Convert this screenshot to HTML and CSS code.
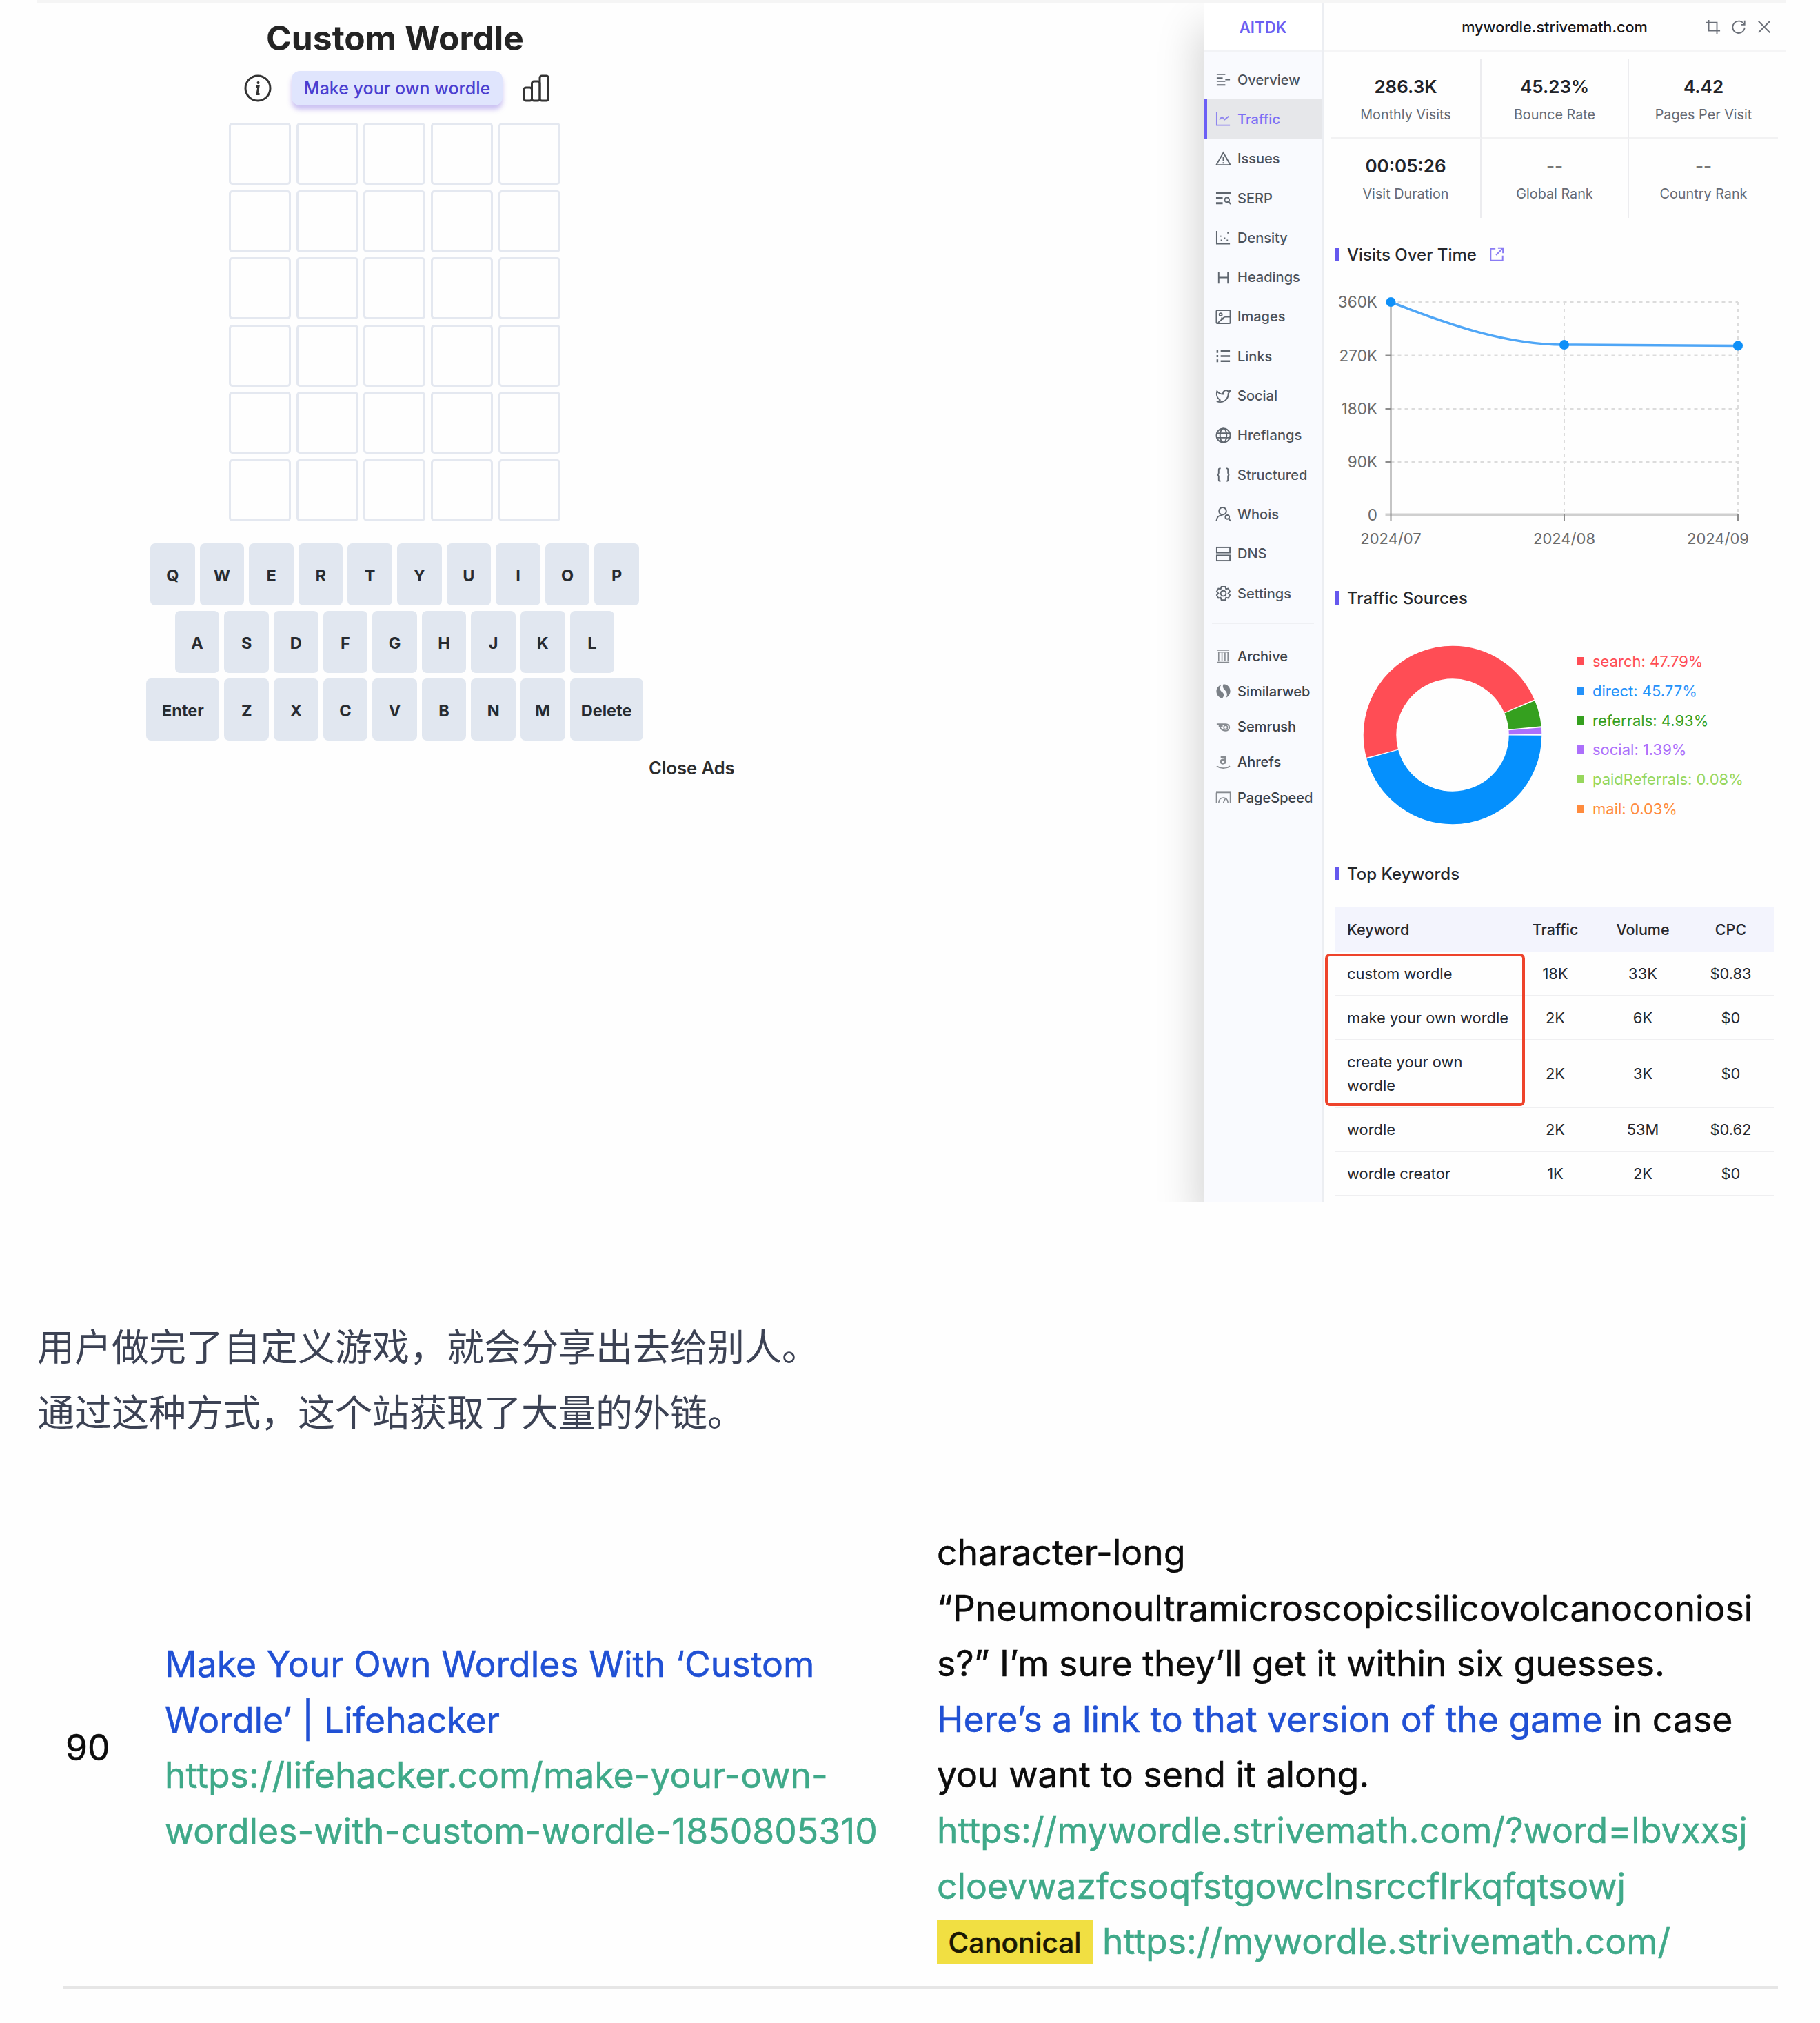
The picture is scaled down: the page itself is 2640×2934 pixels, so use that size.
FILE: index.html
```html
<!DOCTYPE html>
<html lang="zh-CN">
<head>
<meta charset="utf-8">
<title>Custom Wordle</title>
<link rel="stylesheet" href="styles.css">
</head>
<body>
<svg class="sprite" width="0" height="0" aria-hidden="true">
  <symbol id="i-overview" viewBox="0 0 24 24"><path d="M2 4h13M2 9.500h9M2 14.500h13M2 20h13M15 12h7"/></symbol>
  <symbol id="i-traffic" viewBox="0 0 24 24"><path d="M2 2v19.500h20M6 13l4-4 4 4 6-5"/></symbol>
  <symbol id="i-issues" viewBox="0 0 24 24"><path d="M12 2.500 1.500 21h21zM12 9v6M12 17v2"/></symbol>
  <symbol id="i-serp" viewBox="0 0 24 24"><path d="M1 4.500h22M1 11.500h10M1 19.500h10" stroke-width="3"/><circle cx="17.500" cy="14.500" r="3.500"/><path d="m20 17 3 4"/></symbol>
  <symbol id="i-density" viewBox="0 0 24 24"><path d="M2 2v19.500h20M8 9v2M14 12v2M9 15v2M19 4v2M18 15v2"/></symbol>
  <symbol id="i-headings" viewBox="0 0 24 24"><path d="M5 3v18M19 3v18M5 12h14"/></symbol>
  <symbol id="i-images" viewBox="0 0 24 24"><rect x="1.500" y="2" width="21" height="20" rx="1.500"/><circle cx="8" cy="8.500" r="2"/><path d="m4 21 10-9M9 13l3 3M14 12h8"/></symbol>
  <symbol id="i-links" viewBox="0 0 24 24"><path d="M8 4.500h14M8 12h14M8 19.500h14M3 3v4M3 10.500v3M3 17v4" stroke-width="2.600"/></symbol>
  <symbol id="i-social" viewBox="0 0 24 24"><path d="M22.500 3.500l-3 4.500c.5 9-8 15.500-17.500 12 2.500 0 4-.8 5-2C2.500 15 1 9.500 2.500 4.500 5 7.500 8 9 11.500 9 11 4 16 1.500 19 4.500z"/></symbol>
  <symbol id="i-globe" viewBox="0 0 24 24"><circle cx="12" cy="12" r="10.500"/><ellipse cx="12" cy="12" rx="5" ry="10.500"/><path d="M2 8.500h20M2 15.500h20"/></symbol>
  <symbol id="i-braces" viewBox="0 0 24 24"><path d="M8 2.500H6.500Q5 2.500 5 4.500v5Q5 11.500 3 12q2 .5 2 2.500v5q0 2 1.500 2H8M16 2.500h1.500q1.500 0 1.500 2v5q0 2 2 2.500-2 .5-2 2.500v5q0 2-1.500 2H16"/></symbol>
  <symbol id="i-whois" viewBox="0 0 24 24"><circle cx="11" cy="7.500" r="5.500"/><path d="M1.500 22c.5-5 4-8.500 9-8.500"/><circle cx="18" cy="16.500" r="3"/><path d="m20 19 3 3.500"/></symbol>
  <symbol id="i-dns" viewBox="0 0 24 24"><rect x="2" y="2" width="20" height="8"/><rect x="2" y="14" width="20" height="8"/></symbol>
  <symbol id="i-settings" viewBox="0 0 24 24"><path d="M9 2h6l1 3.500 3.500-.8 2.500 4.600L19.500 12l2.500 2.700-2.500 4.600-3.500-.8L15 22H9l-1-3.500-3.500.8L2 14.700 4.500 12 2 9.300l2.500-4.600 3.500.8z"/><circle cx="12" cy="12" r="4"/></symbol>
  <symbol id="i-archive" viewBox="0 0 24 24"><path d="M3 3h18M4 6h16M5 6v14M10 7v12M14.500 7v12M19 6v14M3 21.500h18"/></symbol>
  <symbol id="i-similarweb" viewBox="0 0 24 24"><g fill="currentColor" stroke="none"><path d="M9 2C6 3 2 6 1.500 11 1 17 5 22 10.500 22.500 14 19 13 15 10 13 6 10 6 6 9 2z"/><path d="M12 1.500C18 1 22.500 6 22.500 12c0 4-2.500 8-6 9.500 2-4 1-8-2-11-3-2.500-4-6-2.500-9z"/></g></symbol>
  <symbol id="i-semrush" viewBox="0 0 24 24"><path d="M2 7.500h14a5 5 0 0 1 0 10c-4.500 0-7-1.500-9-4.500M5 10.500h6" stroke-width="2.200"/><circle cx="15.500" cy="12.500" r="2.800"/></symbol>
  <symbol id="i-ahrefs" viewBox="0 0 24 24"><path d="M8 4h7v10M15 8h-3c-5 0-5 6-1 6 2 0 4-1 4-3" stroke-width="2.600"/><path d="M2 18c6 4 14 4 20 0"/></symbol>
  <symbol id="i-pagespeed" viewBox="0 0 24 24"><path d="M1 4h22" stroke-width="3"/><path d="M1.500 5v15.500M22.500 5v15.500M5 20c0-10 14-10 14 0M12 20l3-6" stroke-width="1.600"/></symbol>
</svg>

<section class="stage">
  <div class="game">
    <h1 class="game-title">Custom Wordle</h1>
    <div class="game-actions">
      <svg class="ico-info" viewBox="0 0 40 40"><circle cx="20" cy="20" r="18"/><path d="M17 17.500h4l-2 11h3.500"/><circle class="dot" cx="20.500" cy="12" r="2"/></svg>
      <button class="make-btn">Make your own wordle</button>
      <svg class="ico-stats" viewBox="0 0 40 40"><rect x="2" y="19" width="11.500" height="19" rx="3"/><rect x="13.500" y="10" width="11.500" height="28" rx="3"/><rect x="25" y="2" width="12.500" height="36" rx="3"/></svg>
    </div>
    <div class="board">
      <i></i><i></i><i></i><i></i><i></i><i></i><i></i><i></i><i></i><i></i>
      <i></i><i></i><i></i><i></i><i></i><i></i><i></i><i></i><i></i><i></i>
      <i></i><i></i><i></i><i></i><i></i><i></i><i></i><i></i><i></i><i></i>
    </div>
    <div class="keyboard">
      <div class="keys"><b>Q</b><b>W</b><b>E</b><b>R</b><b>T</b><b>Y</b><b>U</b><b>I</b><b>O</b><b>P</b></div>
      <div class="keys"><b>A</b><b>S</b><b>D</b><b>F</b><b>G</b><b>H</b><b>J</b><b>K</b><b>L</b></div>
      <div class="keys"><b class="wide">Enter</b><b>Z</b><b>X</b><b>C</b><b>V</b><b>B</b><b>N</b><b>M</b><b class="wide">Delete</b></div>
    </div>
    <div class="close-ads">Close Ads</div>
  </div>

  <aside class="panel">
    <nav class="side">
      <div class="brand">AITDK</div>
      <ul class="menu">
        <li><svg><use href="#i-overview"/></svg>Overview</li>
        <li class="active"><svg><use href="#i-traffic"/></svg>Traffic</li>
        <li><svg><use href="#i-issues"/></svg>Issues</li>
        <li><svg><use href="#i-serp"/></svg>SERP</li>
        <li><svg><use href="#i-density"/></svg>Density</li>
        <li><svg><use href="#i-headings"/></svg>Headings</li>
        <li><svg><use href="#i-images"/></svg>Images</li>
        <li><svg><use href="#i-links"/></svg>Links</li>
        <li><svg><use href="#i-social"/></svg>Social</li>
        <li><svg><use href="#i-globe"/></svg>Hreflangs</li>
        <li><svg><use href="#i-braces"/></svg>Structured</li>
        <li><svg><use href="#i-whois"/></svg>Whois</li>
        <li><svg><use href="#i-dns"/></svg>DNS</li>
        <li><svg><use href="#i-settings"/></svg>Settings</li>
      </ul>
      <ul class="menu tools">
        <li><svg><use href="#i-archive"/></svg>Archive</li>
        <li><svg><use href="#i-similarweb"/></svg>Similarweb</li>
        <li><svg><use href="#i-semrush"/></svg>Semrush</li>
        <li><svg><use href="#i-ahrefs"/></svg>Ahrefs</li>
        <li><svg><use href="#i-pagespeed"/></svg>PageSpeed</li>
      </ul>
    </nav>

    <div class="main">
      <header class="bar">
        <span class="domain">mywordle.strivemath.com</span>
        <div class="bar-icons">
          <svg viewBox="0 0 24 24"><path d="M5 1v17h18M1 5h17v18"/></svg>
          <svg viewBox="0 0 24 24"><path d="M20.500 8A9.500 9.500 0 1 0 21.500 13M21.500 2v6.500h-6"/></svg>
          <svg viewBox="0 0 24 24"><path d="m3 3 18 18M21 3 3 21"/></svg>
        </div>
      </header>

      <div class="stats">
        <div><strong>286.3K</strong><span>Monthly Visits</span></div>
        <div><strong>45.23%</strong><span>Bounce Rate</span></div>
        <div><strong>4.42</strong><span>Pages Per Visit</span></div>
        <div><strong>00:05:26</strong><span>Visit Duration</span></div>
        <div><strong class="none">--</strong><span>Global Rank</span></div>
        <div><strong class="none">--</strong><span>Country Rank</span></div>
      </div>

      <h2 class="head">Visits Over Time <svg viewBox="0 0 24 24"><path d="M10 3H2.500v18.500h19V14M14 2h8v8M22 2 11 13"/></svg></h2>
      <svg class="line-chart" viewBox="0 0 671 400">
        <g class="grid">
          <path d="M97.500 38H601M97.500 115.500H601M97.500 193H601M97.500 270H601"/>
          <path d="M349 38V346M601 38V346"/>
        </g>
        <path class="axis-x" d="M89.500 346.500H601"/>
        <path class="axis" d="M97.500 38V356M349 346V356M601 346V356M89.500 115.500h8M89.500 193h8M89.500 270h8"/>
        <path class="series" d="M97.500 38C181 71 265 100 349 100L601 101.500"/>
        <circle cx="97.500" cy="38" r="7"/><circle cx="349" cy="100" r="7"/><circle cx="601" cy="101.500" r="7"/>
        <g class="y-labels"><text x="78" y="46">360K</text><text x="78" y="123.500">270K</text><text x="78" y="201">180K</text><text x="78" y="278">90K</text><text x="78" y="354.500">0</text></g>
        <g class="x-labels"><text x="97.500" y="389">2024/07</text><text x="349" y="389">2024/08</text><text x="572" y="389">2024/09</text></g>
      </svg>

      <h2 class="head sources-head">Traffic Sources</h2>
      <div class="sources">
        <svg class="donut" viewBox="0 0 260 260">
          <g fill="none" stroke-width="47.500">
            <circle cx="130" cy="130" r="105.500" pathLength="360" stroke="#0590fd" stroke-dasharray="164.200 195.800" stroke-dashoffset="-0.300"/>
            <circle cx="130" cy="130" r="105.500" pathLength="360" stroke="#ff4d55" stroke-dasharray="171.200 188.800" stroke-dashoffset="-165.300"/>
            <circle cx="130" cy="130" r="105.500" pathLength="360" stroke="#35a01f" stroke-dasharray="16.800 343.200" stroke-dashoffset="-337.400"/>
            <circle cx="130" cy="130" r="105.500" pathLength="360" stroke="#ac6ffb" stroke-dasharray="4.200 355.800" stroke-dashoffset="-355.200"/>
          </g>
        </svg>
        <ul class="legend">
          <li class="c-search">search: 47.79%</li>
          <li class="c-direct">direct: 45.77%</li>
          <li class="c-ref">referrals: 4.93%</li>
          <li class="c-social">social: 1.39%</li>
          <li class="c-paid">paidReferrals: 0.08%</li>
          <li class="c-mail">mail: 0.03%</li>
        </ul>
      </div>

      <h2 class="head">Top Keywords</h2>
      <div class="kw-wrap">
        <table class="kw">
          <tr><th>Keyword</th><th>Traffic</th><th>Volume</th><th>CPC</th></tr>
          <tr><td>custom wordle</td><td>18K</td><td>33K</td><td>$0.83</td></tr>
          <tr><td>make your own wordle</td><td>2K</td><td>6K</td><td>$0</td></tr>
          <tr class="tall"><td>create your own<br>wordle</td><td>2K</td><td>3K</td><td>$0</td></tr>
          <tr><td>wordle</td><td>2K</td><td>53M</td><td>$0.62</td></tr>
          <tr><td>wordle creator</td><td>1K</td><td>2K</td><td>$0</td></tr>
        </table>
        <div class="marker"></div>
      </div>
    </div>
  </aside>
</section>

<p class="note">用户做完了自定义游戏，就会分享出去给别人。<br>通过这种方式，这个站获取了大量的外链。</p>

<section class="backlink">
  <div class="score">90</div>
  <div class="source">
    <a>Make Your Own Wordles With ‘Custom<br>Wordle’ | Lifehacker</a><br>
    <span class="url">https://lifehacker.com/make-your-own-<br>wordles-with-custom-wordle-1850805310</span>
  </div>
  <div class="target">
    character-long<br>“Pneumonoultramicroscopicsilicovolcanoconiosi<br>s?” I’m sure they’ll get it within six guesses.<br>
    <a>Here’s a link to that version of the game</a> in case<br>you want to send it along.<br>
    <span class="url">https://mywordle.strivemath.com/?word=lbvxxsj<br>cloevwazfcsoqfstgowclnsrccflrkqfqtsowj</span>
    <div class="canon"><span class="tag">Canonical</span><span class="url">https://mywordle.strivemath.com/</span></div>
  </div>
</section>
</body>
</html>
```

FILE: styles.css
```css
* { box-sizing: border-box; }
body { margin: 0; width: 2640px; height: 2934px; overflow: hidden; background: #fefefe; font-family: Inter, "Liberation Sans", sans-serif; color: #222; }
ul { list-style: none; margin: 0; padding: 0; }
.sprite { position: absolute; }

.stage { display: flex; width: 2537px; height: 1744px; margin-left: 54px; overflow: hidden; border-top: 5px solid #f5f5f5; }

/* game */
.game { width: 1692px; }
.game-title { margin: 19px 0 0; width: 1038px; height: 62px; line-height: 62px; text-align: center; font-size: 49.700px; font-weight: 700; color: #242424; }
.game-actions { display: flex; align-items: center; width: 1038px; height: 50px; margin-top: 17px; padding-left: 300px; }
.game-actions svg { width: 40px; height: 40px; fill: none; stroke: #333; stroke-width: 3; }
.ico-info .dot { fill: #333; stroke: none; }
.make-btn { width: 306px; height: 50px; margin: 0 29px; padding: 0; border: 0; border-radius: 12px; background: #e0e5fd; box-shadow: 0 6px 7px rgba(110, 80, 220, .35); font: 500 25px Inter, sans-serif; color: #4a3ed0; }
.board { display: grid; grid-template-columns: repeat(5, 90px); grid-auto-rows: 90px; gap: 7.500px 7.700px; width: 481px; margin: 25px 0 0 278px; }
.board i { border: 3px solid #e4e8f0; border-radius: 5px; }
.keyboard { display: flex; flex-direction: column; gap: 7.500px; width: 1030px; margin-top: 32px; padding-left: 7px; }
.keys { display: flex; justify-content: center; gap: 7px; height: 90.500px; }
.keys b { display: flex; align-items: center; justify-content: center; width: 64.600px; padding-top: 3px; border-radius: 7px; background: #e1e7f0; font-size: 23.500px; font-weight: 700; color: #272b30; }
.keys .wide { width: 106px; }
.close-ads { width: 126px; margin: 24px 0 0 887px; line-height: 32px; font-size: 25.500px; font-weight: 600; color: #2c2c2c; white-space: nowrap; }

/* extension panel */
.panel { display: flex; width: 845px; height: 1739px; background: #fefefe; box-shadow: -8px 34px 56px rgba(0, 0, 0, .17); }
.side { width: 174px; border-right: 2px solid #eceef2; background: #f9fafe; }
.brand { height: 70px; padding-top: 1px; border-bottom: 3px solid #f2f3f6; background: #fff; line-height: 67px; text-align: center; font-size: 22.200px; font-weight: 600; color: #6c5ff2; }
.menu { padding-top: 12px; }
.menu li { display: flex; align-items: center; gap: 9px; height: 57.300px; padding-left: 17px; font-size: 20px; font-weight: 500; color: #4b515b; }
.menu svg { width: 23px; height: 23px; fill: none; stroke: #5f666f; color: #7b8087; stroke-width: 2; overflow: visible; }
.menu .active { padding-left: 12px; border-left: 5px solid #6c5ff5; background: #e6e7ea; color: #7b6ff5; }
.menu .active svg { stroke: #8f86ee; }
.tools { margin: 14px 0 0; padding-top: 23px; background: linear-gradient(#eff0f4, #eff0f4) 12px 0 / 148px 2px no-repeat; }
.tools li { height: 51.200px; color: #3c4148; }
.tools svg { stroke: #878b91; stroke-width: 1.700; }

.main { width: 671px; }
.bar { display: flex; align-items: center; height: 70px; padding-left: 199px; border-bottom: 3px solid #f5f5f6; }
.domain { width: 272px; padding-top: 1px; text-align: center; font-size: 21.700px; font-weight: 500; color: #16171b; white-space: nowrap; }
.bar-icons { display: flex; gap: 15px; margin-left: 83px; }
.bar-icons svg { width: 22px; height: 22px; fill: none; stroke: #6a6f78; stroke-width: 2; }

.stats { display: grid; grid-template-columns: 218px 214px 216px; grid-template-rows: 115px 115px; width: 648px; margin: 11px 0 0 11px; }
.stats div { display: flex; flex-direction: column; align-items: center; padding-top: 22px; border-right: 2px solid #ececef; }
.stats div:nth-child(3n) { border-right: 0; }
.stats div:nth-child(-n+3) { border-bottom: 3px solid #f2f2f3; }
.stats strong { line-height: 36px; font-size: 26px; font-weight: 600; color: #22242a; }
.stats .none { color: #777; }
.stats span { margin-top: 7px; line-height: 30px; font-size: 19.800px; color: #656a74; }

.head { display: flex; align-items: center; height: 30px; margin: 38px 0 0 17px; font-size: 24px; font-weight: 500; color: #25272c; }
.head::before { content: ""; width: 5px; height: 20px; margin-right: 12px; background: #6558ee; }
.head svg { width: 22px; height: 22px; margin-left: 18px; fill: none; stroke: #8a7cf4; stroke-width: 2.200; }

.line-chart { display: block; width: 671px; height: 400px; margin-top: 16px; fill: none; font-size: 22px; }
.grid path { stroke: #dcdcdc; stroke-width: 2; stroke-dasharray: 5 5; }
.axis { stroke: #8c8c8c; stroke-width: 2; }
.axis-x { stroke: #cfcfcf; stroke-width: 4; }
.series { stroke: #4fa6f6; stroke-width: 3.500; }
.line-chart circle { fill: #0f90f8; }
.line-chart text { fill: #6a6a6a; }
.y-labels { text-anchor: end; font-size: 22.500px; }
.x-labels { text-anchor: middle; }

.sources-head { margin-top: 52px; }
.sources { display: flex; align-items: center; height: 260px; margin: 54px 0 0 57px; }
.donut { width: 260px; height: 260px; }
.legend { margin-left: 50px; }
.legend li { display: flex; align-items: center; height: 42.800px; font-size: 22px; white-space: nowrap; }
.legend li::before { content: ""; width: 11px; height: 12px; margin-right: 12px; background: currentColor; }
.c-search { color: #ff4d55; }
.c-direct { color: #2492fa; }
.c-ref { color: #35a01f; }
.c-social { color: #ac6ffb; }
.c-paid { color: #97d75c; }
.c-mail { color: #ff8b3d; }
.sources + .head { margin-top: 56px; }

.kw-wrap { position: relative; width: 637px; margin: 34px 0 0 17px; }
.kw { width: 637px; border-collapse: collapse; table-layout: fixed; font-size: 21.900px; color: #26282e; }
.kw tr { height: 64.400px; border-bottom: 2px solid #efeff1; }
.kw tr:nth-child(n+2) { height: 64px; }
.kw tr:first-child { border: 0; background: #f3f4fd; }
.kw tr.tall { height: 98px; }
.kw th, .kw td { padding: 0; font-weight: 400; text-align: center; line-height: 34px; }
.kw th { font-size: 21.500px; font-weight: 500; width: 126px; }
.kw th:nth-child(3) { width: 128px; }
.kw th:nth-child(4) { width: 127px; }
.kw th:first-child, .kw td:first-child { width: 256px; padding-left: 17px; text-align: left; white-space: nowrap; }
.marker { position: absolute; left: -15px; top: 67px; width: 290px; height: 221px; border: 4px solid #ee432b; border-radius: 7px; }

/* article */
.note { margin: 160px 0 0 54px; font-family: "Noto Sans CJK SC", sans-serif; font-size: 54px; line-height: 94.500px; color: #3c4254; white-space: nowrap; }

.backlink { display: flex; width: 2488px; height: 673px; margin: 118px 0 0 91px; border-bottom: 3px solid #e6e6e6; font-size: 51.700px; line-height: 80.600px; color: #0c0c0c; white-space: nowrap; -webkit-text-stroke: .5px currentColor; }
.score { width: 148px; padding: 283px 0 0 4px; }
.source { width: 1120px; padding-top: 162px; }
.backlink a { color: #2050d4; }
.url { color: #3fa989; }
.canon { display: flex; align-items: center; height: 80.600px; }
.tag { width: 226px; height: 63px; margin: 3px 14px 0 0; background: #f1df42; text-align: center; font-size: 40.500px; font-weight: 500; line-height: 65px; color: #1a1804; }
```
